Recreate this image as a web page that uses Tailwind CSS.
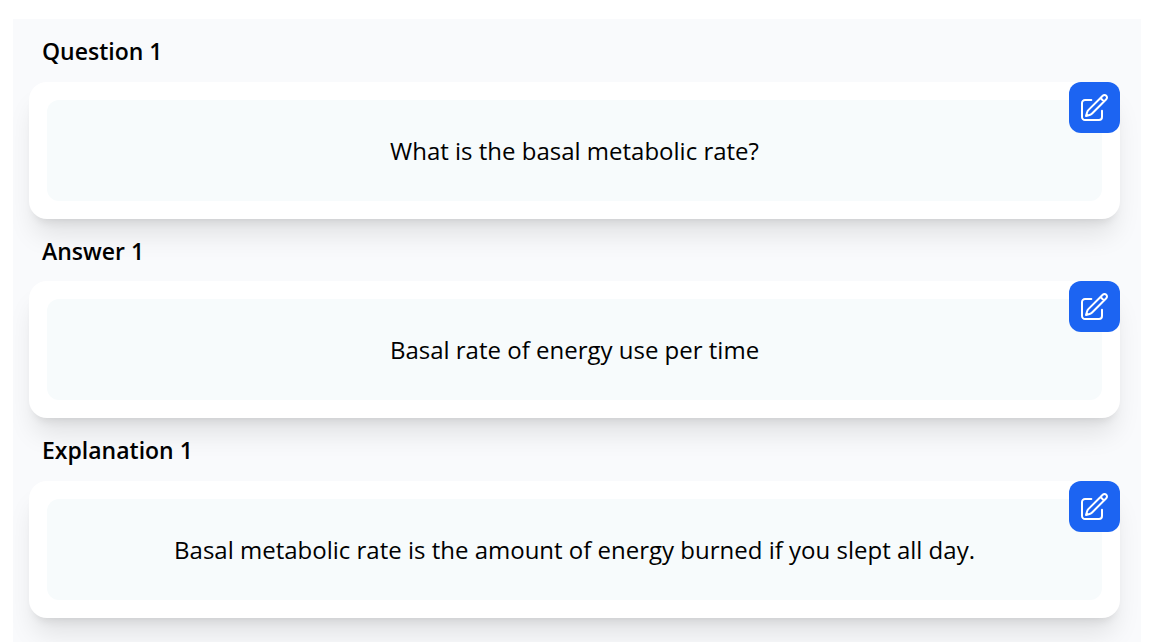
<!DOCTYPE html>
<html lang="en">
<head>
<meta charset="utf-8">
<meta name="viewport" content="width=device-width, initial-scale=1">
<title>Question 1</title>
<script src="https://cdn.jsdelivr.net/npm/@tailwindcss/browser@4"></script>
</head>
<body class="bg-white font-['Segoe_UI','Open_Sans',sans-serif] text-black">
<svg class="hidden" aria-hidden="true">
  <symbol id="edit" viewBox="0 0 24 24" fill="none" stroke="currentColor" stroke-width="1.5" stroke-linecap="round" stroke-linejoin="round">
    <path d="m16.862 4.487 1.687-1.688a1.875 1.875 0 1 1 2.652 2.652L10.582 16.07a4.5 4.5 0 0 1-1.897 1.13L6 18l.8-2.685a4.5 4.5 0 0 1 1.13-1.897l8.932-8.931Zm0 0L19.5 7.125M18 14v4.75A2.25 2.25 0 0 1 15.75 21H5.25A2.25 2.25 0 0 1 3 18.75V8.25A2.25 2.25 0 0 1 5.25 6H10"/>
  </symbol>
</svg>
<main class="mt-[19px] mr-4 ml-[13px] overflow-hidden bg-[#f9fafc] pr-[21px] pb-6 pl-4">
  <section>
    <h2 class="px-[13px] pt-4 pb-[15px] text-[23px] leading-8 font-semibold">Question 1</h2>
    <div class="relative rounded-[18px] bg-white p-[18px] shadow-[0_20px_27px_-5px_rgb(0_0_0/0.1),0_8px_10px_-6px_rgb(0_0_0/0.1)]">
      <p class="flex min-h-[101px] items-center justify-center rounded-xl bg-[#f7fbfc] px-4 text-center text-2xl leading-8">What is the basal metabolic rate?</p>
      <button type="button" aria-label="Edit question" class="absolute top-0 right-0 flex size-[51px] items-center justify-center rounded-xl bg-[#1c64f2] pr-px text-white"><svg class="size-8" aria-hidden="true"><use href="#edit"/></svg></button>
    </div>
  </section>
  <section>
    <h2 class="px-[13px] pt-4 pb-[14px] text-[23px] leading-8 font-semibold">Answer 1</h2>
    <div class="relative rounded-[18px] bg-white p-[18px] shadow-[0_20px_27px_-5px_rgb(0_0_0/0.1),0_8px_10px_-6px_rgb(0_0_0/0.1)]">
      <p class="flex min-h-[101px] items-center justify-center rounded-xl bg-[#f7fbfc] px-4 text-center text-2xl leading-8">Basal rate of energy use per time</p>
      <button type="button" aria-label="Edit answer" class="absolute top-0 right-0 flex size-[51px] items-center justify-center rounded-xl bg-[#1c64f2] pr-px text-white"><svg class="size-8" aria-hidden="true"><use href="#edit"/></svg></button>
    </div>
  </section>
  <section>
    <h2 class="px-[13px] pt-4 pb-[15px] text-[23px] leading-8 font-semibold">Explanation 1</h2>
    <div class="relative rounded-[18px] bg-white p-[18px] shadow-[0_20px_27px_-5px_rgb(0_0_0/0.1),0_8px_10px_-6px_rgb(0_0_0/0.1)]">
      <p class="flex min-h-[101px] items-center justify-center rounded-xl bg-[#f7fbfc] px-4 text-center text-2xl leading-8">Basal metabolic rate is the amount of energy burned if you slept all day.</p>
      <button type="button" aria-label="Edit explanation" class="absolute top-0 right-0 flex size-[51px] items-center justify-center rounded-xl bg-[#1c64f2] pr-px text-white"><svg class="size-8" aria-hidden="true"><use href="#edit"/></svg></button>
    </div>
  </section>
</main>
</body>
</html>
